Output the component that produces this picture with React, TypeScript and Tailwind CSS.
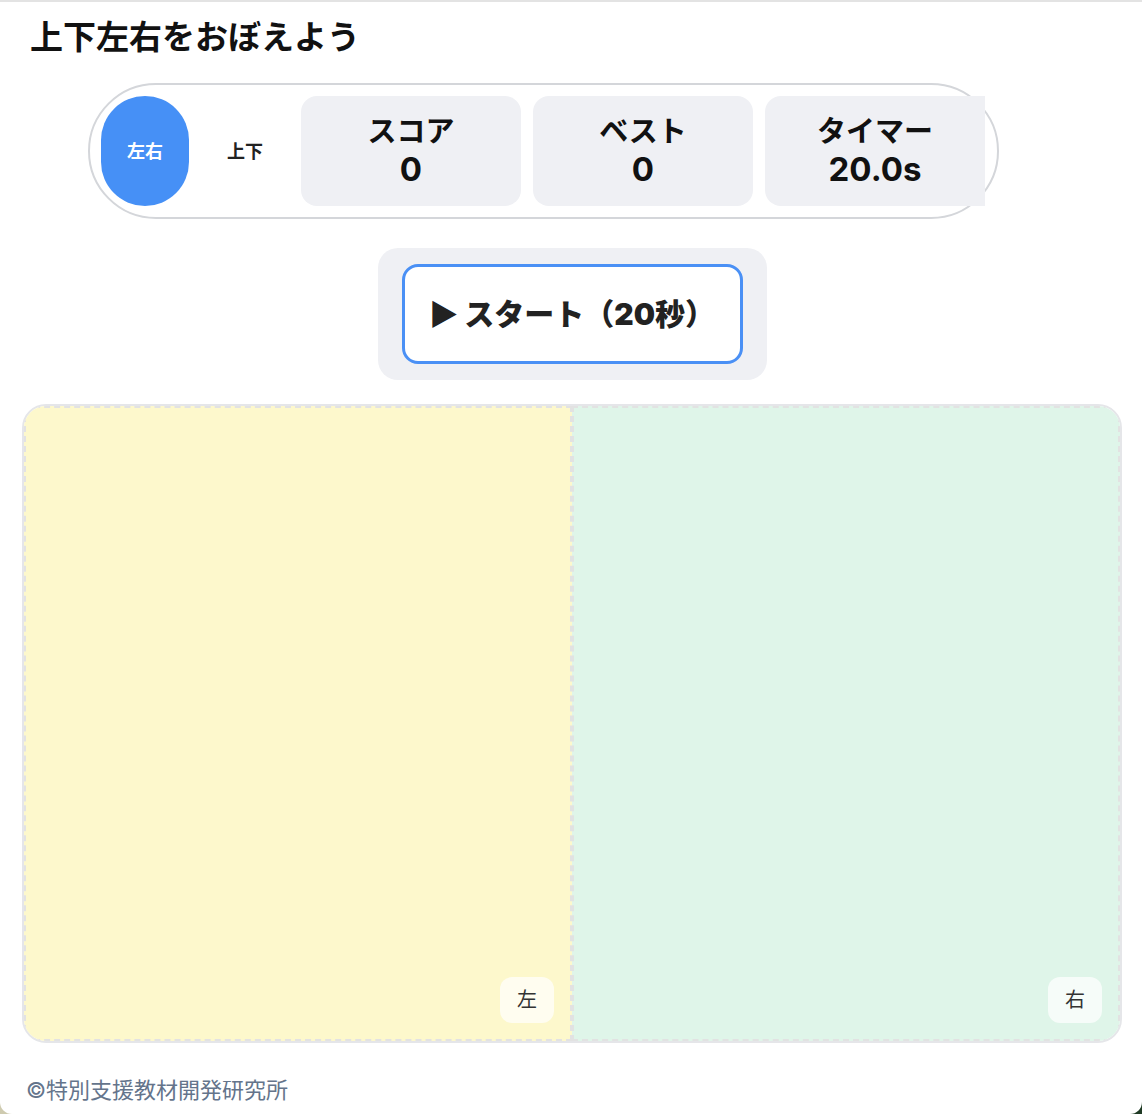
import { useState } from 'react';

const font = { fontFamily: 'Inter, "Noto Sans CJK JP", "Noto Sans", sans-serif' };

function StatCard({ label, value, last }: { label: string; value: string; last?: boolean }) {
  return (
    <div
      className={`w-[220px] h-[110px] shrink-0 bg-[#eff0f4] flex flex-col items-center justify-center gap-[6px] ${
        last ? 'rounded-l-2xl' : 'rounded-2xl'
      }`}
    >
      <div className="text-[29px] font-bold leading-[30px] text-[#111]">{label}</div>
      <div className="text-[33px] font-bold leading-[32px] text-[#111]">{value}</div>
    </div>
  );
}

export default function App() {
  const [mode, setMode] = useState<'lr' | 'ud'>('lr');

  return (
    <div className="min-h-screen bg-gradient-to-r from-[#cfcbb0] via-[#7d8a6a] to-[#1f3a24]" style={font}>
      <div className="bg-white h-[1114px] border-t-2 border-[#e3e3e3] rounded-b-xl pl-[22px] pr-[20px] flex flex-col">
        <h1 className="text-[33px] font-bold leading-[38px] text-[#111] mt-[16px] ml-[8px]">
          上下左右をおぼえよう
        </h1>

        <div className="mt-[27px] ml-[66px] w-[911px] border-2 border-[#d4d6da] rounded-full p-[11px] flex items-center gap-3">
          <button
            onClick={() => setMode('lr')}
            className={`w-[88px] h-[110px] shrink-0 rounded-full text-[18px] font-bold ${
              mode === 'lr' ? 'bg-[#4690f6] text-white' : 'text-[#222]'
            }`}
          >
            左右
          </button>
          <button
            onClick={() => setMode('ud')}
            className={`w-[88px] h-[110px] shrink-0 rounded-full text-[18px] font-bold ${
              mode === 'ud' ? 'bg-[#4690f6] text-white' : 'text-[#222]'
            }`}
          >
            上下
          </button>
          <StatCard label="スコア" value="0" />
          <StatCard label="ベスト" value="0" />
          <StatCard label="タイマー" value="20.0s" last />
        </div>

        <div className="mt-[29px] self-center bg-[#eff0f4] rounded-[20px] px-6 py-4">
          <button className="w-[341px] h-[100px] bg-white border-[3px] border-[#4a90f5] rounded-2xl text-[30px] font-black text-[#222]">
            ▶ スタート（20秒）
          </button>
        </div>

        <div className="mt-6 h-[639px] border-2 border-[#e5e6e9] rounded-3xl overflow-hidden grid grid-cols-2">
          <div className="relative bg-[#fdf8cc] border-2 border-dashed border-[#e2e2e2]">
            <span className="absolute right-[16px] bottom-[16px] w-[54px] h-[46px] rounded-xl bg-white/70 flex items-center justify-center text-[20px] text-[#333]">
              左
            </span>
          </div>
          <div className="relative bg-[#dff5e9] border-2 border-dashed border-[#e2e2e2]">
            <span className="absolute right-[16px] bottom-[16px] w-[54px] h-[46px] rounded-xl bg-white/70 flex items-center justify-center text-[20px] text-[#333]">
              右
            </span>
          </div>
        </div>

        <div className="mt-[33px] ml-[4px] text-[22px] text-[#64748b] leading-[28px]">
          ©特別支援教材開発研究所
        </div>
      </div>
    </div>
  );
}
